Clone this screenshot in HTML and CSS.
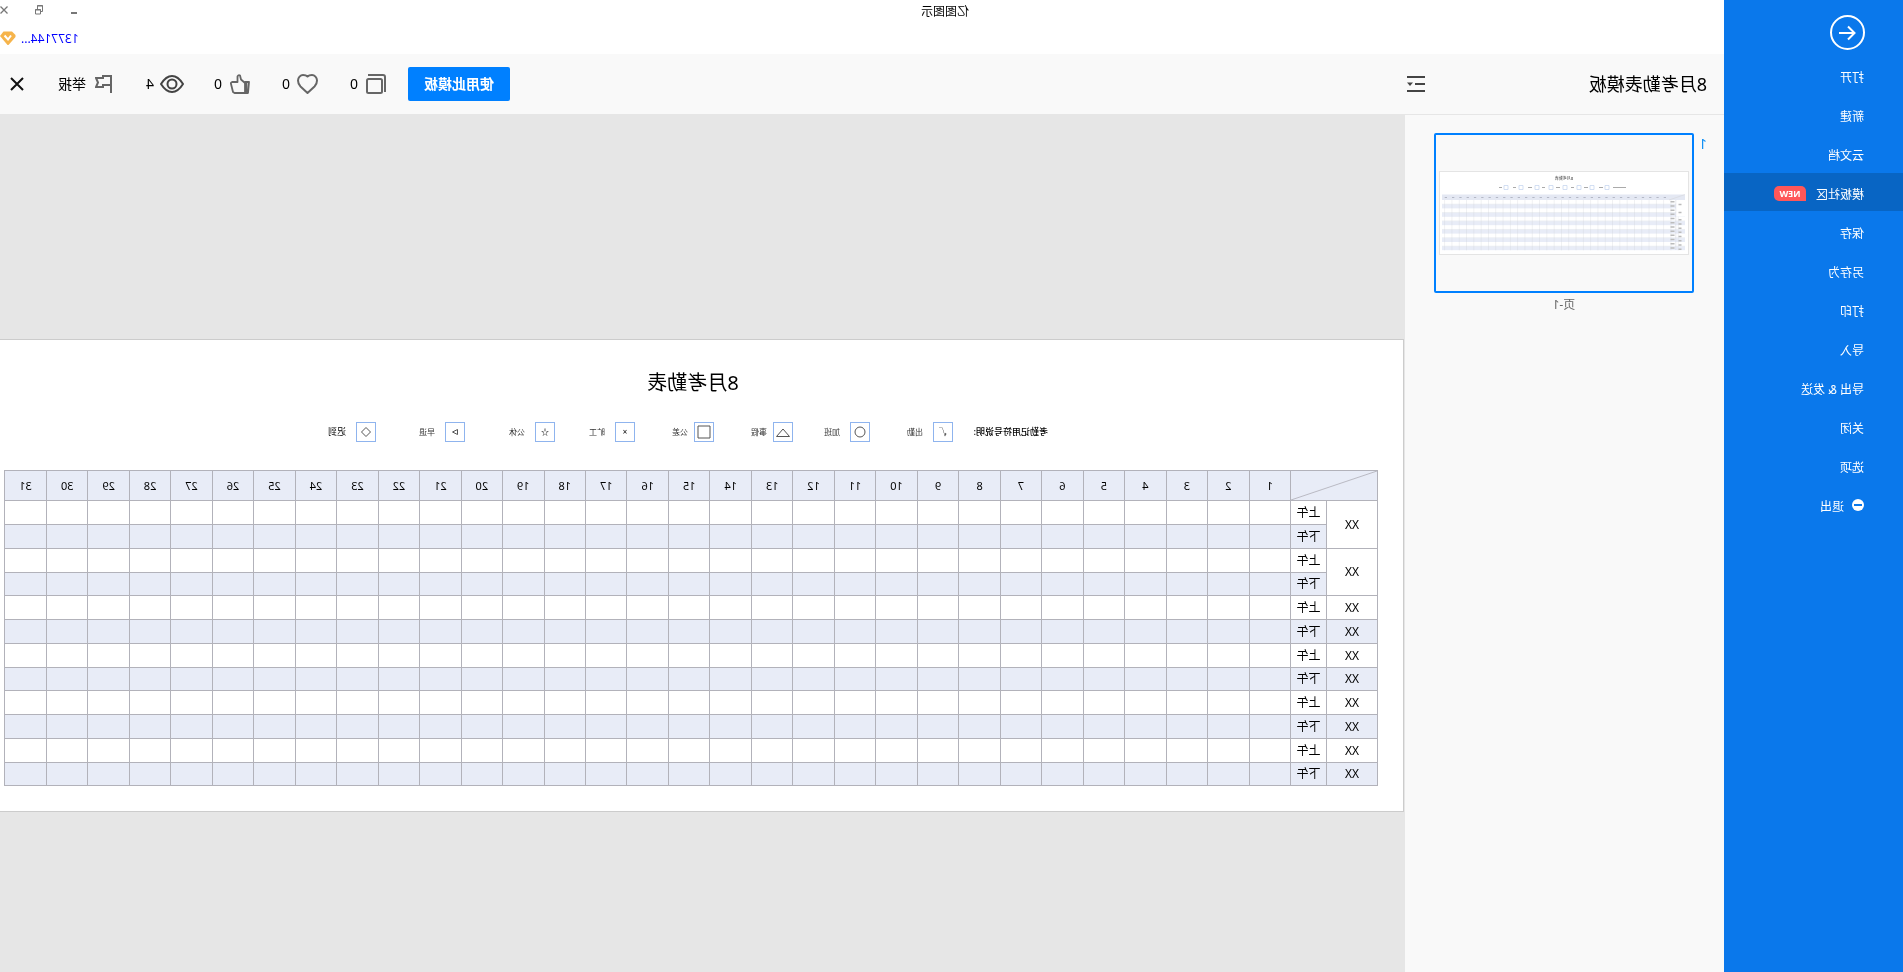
FILE: index.html
```html
<!DOCTYPE html>
<html lang="zh-CN">
<head>
<meta charset="utf-8">
<title>亿图图示</title>
<link rel="stylesheet" href="styles.css">
</head>
<body>
<div class="app">
  <nav class="sidebar">
    <button class="back" aria-label="返回">
      <svg width="35" height="35" viewBox="0 0 35 35" fill="none" stroke="#fff" stroke-width="2"><circle cx="17.500" cy="17.500" r="16.500"/><path d="M26 18H11M17 11.500L10.500 18L17 24.500"/></svg>
    </button>
    <a class="item" href="#">打开</a>
    <a class="item" href="#">新建</a>
    <a class="item" href="#">云文档</a>
    <a class="item active" href="#">模板社区<span class="badge">NEW</span></a>
    <a class="item" href="#">保存</a>
    <a class="item" href="#">另存为</a>
    <a class="item" href="#">打印</a>
    <a class="item" href="#">导入</a>
    <a class="item" href="#">导出 &amp; 发送</a>
    <a class="item" href="#">关闭</a>
    <a class="item" href="#">选项</a>
    <a class="item exit" href="#"><svg width="12" height="12" viewBox="0 0 12 12"><circle cx="6" cy="6" r="6" fill="#fff"/><path d="M2 6H10" stroke="#0a78eb" stroke-width="2"/></svg>退出</a>
  </nav>
  <div class="main">
    <div class="titlebar">
      <div class="window-title">亿图图示</div>
      <div class="window-buttons">
        <button aria-label="最小化"><svg width="8" height="10" viewBox="0 0 8 10"><path d="M1 8H7" stroke="#777" stroke-width="2"/></svg></button>
        <button aria-label="还原"><svg width="8" height="10" viewBox="0 0 8 10" fill="none" stroke="#777"><path d="M2.500 4.500H7.500V9H2.500zM2 6.500H.5V.5H5.500V4M0 1H6M2 5H8"/></svg></button>
        <button aria-label="关闭窗口"><svg width="8" height="10" viewBox="0 0 8 10"><path d="M.5 1.500L7.500 8.500M7.500 1.500L.5 8.500" stroke="#777" stroke-width="1.300"/></svg></button>
      </div>
    </div>
    <div class="account">
      <a href="#">1377144...</a>
      <svg width="16" height="15" viewBox="0 0 16 15"><path d="M4 .5H12.500L16 5L8.500 14H7.500L.5 6V4z" fill="#f6b44b"/><path d="M5 4.500L8 8.500L11.500 4.500" fill="none" stroke="#fff" stroke-width="2"/></svg>
    </div>
    <header class="header">
      <h1>8月考勤表模板</h1>
      <button class="fold" aria-label="收起目录"><svg width="18" height="16" viewBox="0 0 18 16"><path d="M0 1H18M0 8H10M0 15H18" stroke="#444" stroke-width="2"/><path d="M12 6.500H18L15 10z" fill="#444"/></svg></button>
      <div class="actions">
        <button class="use">使用此模板</button>
        <button class="act"><span class="ico"><svg width="20" height="20" viewBox="0 0 20 20" fill="none" stroke="#666" stroke-width="2"><rect x="4" y="5" width="15" height="14" rx="1.500"/><path d="M1 18V3Q1 1 3 1H18"/></svg></span>0</button>
        <button class="act"><span class="ico"><svg width="21" height="20" viewBox="0 0 21 20" fill="none" stroke="#666" stroke-width="2" stroke-linejoin="round"><path d="M10.500 19L3.500 12.500C1.500 10.500 1 9 1 6.500C1 3.500 3.500 1 6 1C8 1 9.500 1.500 10.500 2.500C11.500 1.500 13 1 15 1C17.500 1 20 3.500 20 6.500C20 9 19.500 10.500 17.500 12.500z"/></svg></span>0</button>
        <button class="act"><span class="ico"><svg width="20" height="20" viewBox="0 0 20 20" fill="none" stroke="#666" stroke-width="1.800" stroke-linejoin="round"><path d="M1 8H5V19H2zM3.500 8.500V18.500M5 9L9 5.500L10 1.500Q11.500 .5 12.500 2.500V8H18Q19.500 8.500 19 10L17 18L15.500 19H5z"/></svg></span>0</button>
        <button class="act"><span class="ico"><svg width="24" height="18" viewBox="0 0 24 18" fill="none" stroke="#444" stroke-width="2"><path d="M1 9Q6 1 12 1T23 9Q18 17 12 17T1 9z"/><circle cx="12" cy="9" r="4.500"/></svg></span>4</button>
        <button class="act report"><span class="ico"><svg width="17" height="18" viewBox="0 0 17 18" fill="none" stroke="#666" stroke-width="2"><path d="M1 18V1H9V3H16L14 7.500L16 12H9V10H1"/></svg></span>举报</button>
        <button class="close" aria-label="关闭"><svg width="14" height="14" viewBox="0 0 14 14"><path d="M1 1L13 13M13 1L1 13" stroke="#111" stroke-width="2"/></svg></button>
      </div>
    </header>
    <div class="workspace">
      <aside class="pages">
        <span class="page-no">1</span>
        <figure>
          <button class="thumb" aria-label="页-1">
            <svg class="preview" viewBox="0 0 250 84">
              <defs>
                <pattern id="rows" x="3" y="29" width="7.300" height="8.400" patternUnits="userSpaceOnUse">
                  <path d="M0 4.200H7.300V8.400H0z" fill="#e8ecf7"/><path d="M.2 0V8.400" stroke="#ccced6" stroke-width=".4"/><path d="M0 4.200H7.300" stroke="#ccced6" stroke-width=".2"/>
                </pattern>
              </defs>
              <rect x=".5" y=".5" width="249" height="83" fill="#fff" stroke="#e4e4e4"/>
              <text x="125" y="9" class="tiny-title">8月考勤表</text>
              <path d="M63 16.500H76M86 16.500H90M101 16.500H105M115 16.500H118M129 16.500H133M144 16.500H147M157 16.500H161M173 16.500H176M187 16.500H190" stroke="#aaa" stroke-width="1.200"/>
              <path d="M80 14.500h4v4h-4zM95 14.500h4v4h-4zM108 14.500h4v4h-4zM122 14.500h4v4h-4zM136 14.500h4v4h-4zM150 14.500h4v4h-4zM166 14.500h4v4h-4zM181 14.500h4v4h-4z" fill="#fff" stroke="#c8d7f0" stroke-width=".8"/>
              <path d="M4 23.500H247V29H4z" fill="#e4e8f3"/><path d="M4 23.500L20 29" stroke="#ccc" stroke-width=".4"/>
              <path d="M23 26.500H247" stroke="#b4b8c6" stroke-width="1.200" stroke-dasharray="2.300 5"/>
              <rect x="4" y="29" width="243" height="50.400" fill="url(#rows)"/>
              <path d="M4 29.200H13V45.600H4z" fill="#fff"/>
              <path d="M13.200 29V79" stroke="#d0d2da" stroke-width=".5"/>
              <path d="M16.500 30V79" stroke="#bbb" stroke-width="4" stroke-dasharray="1.500 2.700"/>
              <path d="M9 48V79" stroke="#bbb" stroke-width="3" stroke-dasharray="1.500 2.700"/>
              <path d="M7.500 33.500H10.500M7.500 41.500H10.500" stroke="#bbb" stroke-width="1.500"/>
            </svg>
          </button>
          <figcaption>页-1</figcaption>
        </figure>
      </aside>
      <main class="canvas">
        <section class="sheet">
          <h2>8月考勤表</h2>
          <div class="legend">
            <strong>考勤记用符号说明:</strong>
            <span class="mark wide"><i>√</i>出勤</span>
            <span class="mark wide"><i><svg viewBox="0 0 18 18"><circle cx="9" cy="9" r="5"/></svg></i>加班</span>
            <span class="mark"><i><svg viewBox="0 0 18 18"><path d="M2.500 13.500H15.500L9 6z"/></svg></i>事假</span>
            <span class="mark"><i><svg viewBox="0 0 18 18"><path d="M3 3H15V15H3z"/></svg></i>公差</span>
            <span class="mark wide"><i>×</i>旷工</span>
            <span class="mark wide"><i><b>☆</b></i>公休</span>
            <span class="mark wide"><i><svg viewBox="0 0 18 18"><path d="M6.500 6.500V11.500L11.500 9z"/></svg></i>早退</span>
            <span class="mark wide late"><i><svg viewBox="0 0 18 18"><path d="M9 4.500L13.500 9L9 13.500L4.500 9z"/></svg></i>迟到</span>
          </div>
          <table>
            <colgroup><col class="c-name"><col class="c-half"><col span="31"></colgroup>
            <thead><tr id="days"><th colspan="2" class="corner" aria-label="姓名与日期"><svg viewBox="0 0 87 30" preserveAspectRatio="none"><path d="M0 0L87 30"/></svg></th></tr></thead>
            <tbody id="rows-body"></tbody>
          </table>
        </section>
      </main>
    </div>
  </div>
</div>
<script src="table.js"></script>
</body>
</html>
```
FILE: styles.css
```css
* { box-sizing: border-box; }
html { height: 100%; overflow: hidden; background: #fff; }
body { margin: 0; height: 100%; font: 12px/16px "Noto Sans", "Noto Sans CJK SC", sans-serif; color: #000; }
button { border: 0; padding: 0; background: none; font: inherit; color: inherit; }
a { text-decoration: none; }
svg { display: block; }
h1, h2, figure { margin: 0; font-weight: 400; }

/* The whole window is shown as a mirror image. */
.app { display: flex; height: 100vh; overflow: hidden; transform: scaleX(-1); }

.sidebar { flex: 0 0 179px; background: #0a78eb; display: flex; flex-direction: column; gap: 1px; color: #fff; }
.back { display: flex; align-items: flex-start; height: 55px; padding: 15px 0 0 38px; }
.item { display: flex; align-items: center; height: 38px; padding: 6px 0 0 39px; color: #fff; }
.active { background: #0865c4; }
.badge { margin: 0 0 4px 10px; width: 32px; height: 15px; border-radius: 5px 5px 5px 0; background: #ff5759; font-size: 9px; line-height: 15px; font-weight: 700; text-align: center; }
.exit { gap: 8px; }
.exit svg { margin-bottom: 4px; }

.main { flex: 1; min-width: 0; display: flex; flex-direction: column; }
.titlebar { display: flex; height: 22px; padding-top: 4px; }
.window-title { flex: 1; text-align: center; margin-right: -78px; padding-right: 166px; }
.window-buttons { display: flex; gap: 27px; width: 78px; padding-top: 1px; align-items: flex-start; }
.account { display: flex; justify-content: flex-end; align-items: center; gap: 5px; height: 32px; }
.account a { color: #00f; padding-top: 2px; }

.header { display: flex; align-items: center; height: 61px; background: #f9f9f9; border-bottom: 1px solid #e6e6e6; }
h1 { width: 299px; padding-left: 17px; font-size: 18px; line-height: 24px; }
.actions { flex: 1; display: flex; justify-content: flex-end; align-items: center; }
.use { width: 102px; height: 34px; border-radius: 2px; background: #0080ff; color: #fff; font-size: 14px; font-weight: 700; margin-right: 20px; }
.act { display: flex; align-items: center; width: 68px; font-size: 14px; line-height: 20px; white-space: nowrap; }
.ico { display: flex; justify-content: center; width: 24px; margin-right: 6px; }
.report { width: 96px; margin-right: -4px; }
.close { padding-right: 10px; }

.workspace { flex: 1; min-height: 0; display: flex; }
.pages { flex: 0 0 319px; display: flex; align-items: flex-start; padding: 18px 0 0 17px; background: #f9f9f9; }
.page-no { width: 13px; padding-top: 3px; font-size: 14px; color: #1090f5; }
.thumb { display: block; width: 260px; height: 160px; padding: 0 3px; border: 2px solid #0080ff; border-radius: 2px; }
.preview { width: 100%; }
.tiny-title { font-size: 4px; text-anchor: middle; fill: #444; }
figcaption { padding-top: 4px; text-align: center; color: #666; }

.canvas { flex: 1; min-width: 0; background: #e6e6e6; padding: 224px 0 0 1px; }
.sheet { background: #fff; border: solid #ccc; border-width: 1px 0 1px 1px; padding: 29px 4px 25px 25px; }
h2 { padding-right: 4px; font-size: 20px; line-height: 28px; text-align: center; }
.legend { display: grid; grid-template-columns: 95px 83px 77px 79px 79px 80px 90px 89px 60px; align-items: center; height: 20px; margin: 25px 0 28px 330px; font-size: 8px; line-height: 12px; color: #333; }
.legend strong { font-size: 9px; font-weight: 500; color: #000; }
.mark { display: flex; align-items: center; gap: 6px; white-space: nowrap; }
.wide { gap: 10px; }
.late { font-size: 9px; color: #000; }
.mark i { width: 20px; height: 20px; border: 1px solid #8fb4ee; font-style: normal; line-height: 18px; text-align: center; color: #000; }
.mark svg { fill: none; stroke: #555; }

table { width: 100%; table-layout: fixed; border-collapse: collapse; }
.c-name { width: 51px; }
.c-half { width: 36px; }
th, td { padding: 0; border: 1px solid #b2b2ba; text-align: center; font-weight: 400; line-height: 16px; }
th { height: 30px; background: #e8ecf7; font-size: 11px; }
.corner svg { width: 100%; height: 29px; stroke: #b8b8c2; }
td { height: 24px; }
tbody tr:nth-child(4n) td { height: 23px; }
tbody tr:nth-child(even) { background: #e8ecf7; }
```
FILE: table.js
```js
const days = document.getElementById('days');
const body = document.getElementById('rows-body');
const DAY_COUNT = 31;
const ROW_COUNT = 12;

for (let d = 1; d <= DAY_COUNT; d++) {
  const th = document.createElement('th');
  th.textContent = d;
  days.append(th);
}

for (let r = 0; r < ROW_COUNT; r++) {
  const tr = body.insertRow();
  const merged = r < 4;
  if (!merged || r % 2 === 0) {
    const name = tr.insertCell();
    name.textContent = 'XX';
    if (merged) name.rowSpan = 2;
  }
  tr.insertCell().textContent = r % 2 ? '下午' : '上午';
  for (let d = 0; d < DAY_COUNT; d++) tr.insertCell();
}
```
